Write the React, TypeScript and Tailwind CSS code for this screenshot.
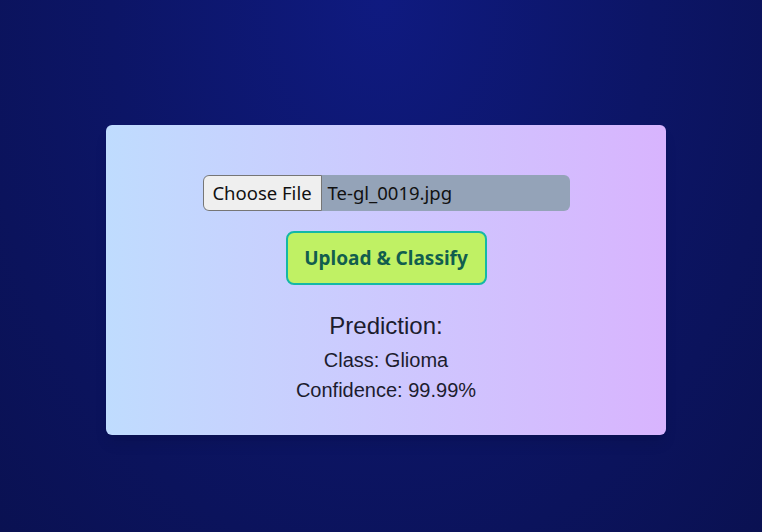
export default function App() {
  return (
    <div className="min-h-screen w-full bg-[radial-gradient(ellipse_at_top,#0f1a80_0%,#0c1566_50%,#0a1152_100%)] pl-[10px] pt-[125px] font-['Liberation_Sans',Arial,sans-serif]">
      <div className="mx-auto flex h-[310px] w-[560px] flex-col items-center rounded-md bg-gradient-to-r from-[#bfdcfe] to-[#d8b4fe] pt-[50px] shadow-lg">
        {/* file picker (static look) */}
        <div className="flex h-9 w-[367px] items-center overflow-hidden rounded-md bg-[#94a3b8] font-['Noto_Sans',sans-serif] text-[18.5px] text-[#111]">
          <span className="flex h-full w-[119px] items-center justify-center rounded-l-md border border-[#767676] bg-[#efefef]">
            Choose File
          </span>
          <span className="pl-[6px]">Te-gl_0019.jpg</span>
        </div>

        <button className="mt-5 h-[54px] w-[201px] rounded-lg border-2 border-[#14b8a6] bg-[#c0f164] font-['Noto_Sans',sans-serif] text-[19px] font-bold text-[#115e4e]">
          Upload &amp; Classify
        </button>

        <div className="mt-[26px] flex flex-col items-center text-[#1c1c2e]">
          <h2 className="text-[24px] leading-[30px]">Prediction:</h2>
          <p className="mt-[7px] text-[20px] leading-[24px]">Class: Glioma</p>
          <p className="mt-[6px] text-[20px] leading-[24px]">Confidence: 99.99%</p>
        </div>
      </div>
    </div>
  )
}
